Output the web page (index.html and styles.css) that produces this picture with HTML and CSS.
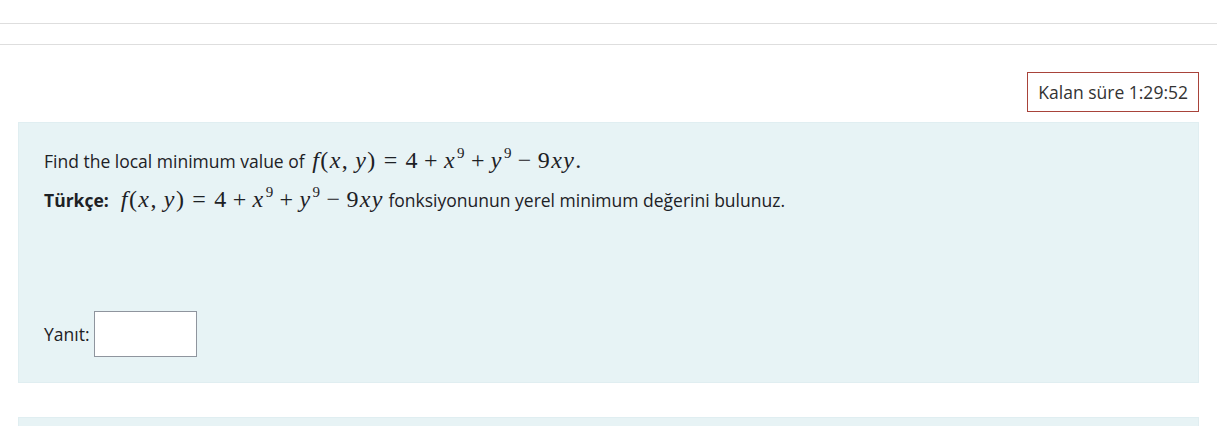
FILE: index.html
```html
<!DOCTYPE html>
<html lang="tr">
<head>
<meta charset="utf-8">
<link rel="stylesheet" href="styles.css">
</head>
<body>
<div class="topbar"></div>
<div class="subbar"></div>
<div class="timer-row">
  <div class="timer">Kalan süre 1:29:52</div>
</div>
<div class="question">
  <p class="line">Find the local minimum value of <span class="math"><i>f</i>(<i>x</i>,<span class="thin"></span><i>y</i>)<span class="rel">=</span>4<span class="op">+</span><i>x</i><sup>9</sup><span class="op">+</span><i>y</i><sup>9</sup><span class="op">−</span>9<i>xy</i>.</span></p>
  <p class="line"><b>Türkçe:</b>&nbsp; <span class="math"><i>f</i>(<i>x</i>,<span class="thin"></span><i>y</i>)<span class="rel">=</span>4<span class="op">+</span><i>x</i><sup>9</sup><span class="op">+</span><i>y</i><sup>9</sup><span class="op">−</span>9<i>xy</i></span> fonksiyonunun yerel minimum değerini bulunuz.</p>
  <div class="answer">
    <label class="answer-label">Yanıt:</label>
    <input class="answer-input" type="text">
  </div>
</div>
<div class="question next"></div>
</body>
</html>
```

FILE: styles.css
```css
html, body {
  margin: 0;
  padding: 0;
  background: #fff;
  font-family: "Open Sans", "Noto Sans", sans-serif;
  color: #1d2125;
}
.topbar {
  height: 23px;
  border-bottom: 1px solid #dedede;
}
.subbar {
  height: 20px;
  border-bottom: 1px solid #dedede;
}
.timer-row {
  display: flex;
  justify-content: flex-end;
  padding: 27px 18px 10px 0;
}
.timer {
  border: 1px solid #a8433a;
  height: 38px;
  line-height: 38px;
  padding: 0 10px;
  font-size: 17.5px;
  color: #333;
}
.question {
  margin: 0 18px;
  background: #e7f3f5;
  border: 1px solid #e0eef1;
  height: 259px;
  padding: 0 25px;
  box-sizing: content-box;
}
.question .line {
  margin: 0;
  font-size: 17.5px;
  line-height: 38px;
  white-space: nowrap;
}
.question .line:first-child {
  margin-top: 18px;
}
.math {
  font-family: "Liberation Serif", "Times New Roman", serif;
  font-size: 24px;
  letter-spacing: 1.4px;
  margin-left: 3px;
}
.math i { font-style: italic; }
.math .thin { display: inline-block; width: 6px; }
.math .op { padding: 0 5px; }
.math .rel { padding: 0 7px; }
.math sup { font-size: 15px; vertical-align: 10px; line-height: 0; margin-left: 1px; }
b { font-weight: 700; }
.answer {
  display: flex;
  align-items: center;
  margin-top: 92px;
}
.answer-label {
  font-size: 17.5px;
  margin-right: 4px;
}
.answer-input {
  width: 103px;
  height: 46px;
  box-sizing: border-box;
  border: 1px solid #8f959e;
  background: #fff;
  margin: 0;
}
.question.next {
  margin-top: 34px;
  height: 20px;
}
```
